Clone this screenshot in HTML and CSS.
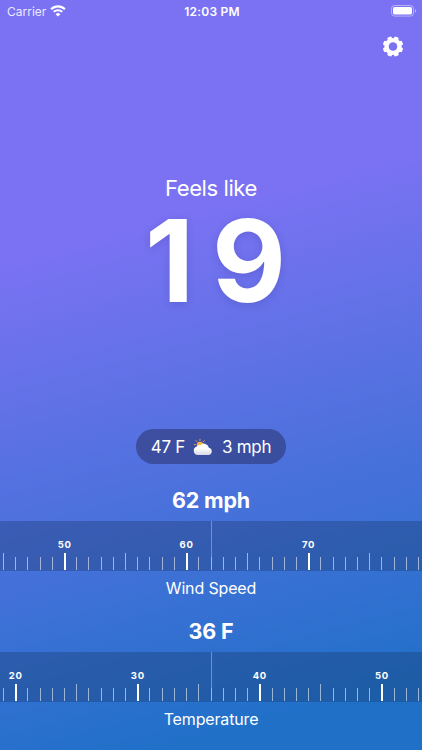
FILE: index.html
```html
<!DOCTYPE html>
<html>

	<head>
		<meta charset="UTF-8">
		<title>Feels like</title>
		<link rel="stylesheet" href="styles.css">
	</head>

	<body>

		<div class="app">
			<div class="status">
				<div class="status_left">
					<span class="carrier">Carrier</span>
					<svg class="wifi" width="16" height="12" viewBox="0 0 16 12" fill="none" stroke="#fff">
						<path d="M1.1 4.2a9.8 9.8 0 0 1 13.8 0" stroke-width="2.1" />
						<path d="M3.7 6.9a6.1 6.1 0 0 1 8.6 0" stroke-width="2" />
						<path d="M8 11.6L5.6 9.2a3.5 3.5 0 0 1 4.8 0z" fill="#fff" stroke="none" />
					</svg>
				</div>
				<div class="clock">12:03 PM</div>
				<div class="status_right">
					<svg width="26" height="12" viewBox="0 0 26 12">
						<rect x="0.5" y="0.5" width="22" height="10.6" rx="3.2" fill="none" stroke="#fff" stroke-opacity=".45" />
						<rect x="2" y="2" width="19" height="7.6" rx="1.8" fill="#fff" />
						<path d="M24 4v3.8c1.5-.6 1.5-3.2 0-3.8z" fill="#fff" fill-opacity=".5" />
					</svg>
				</div>
			</div>

			<div class="toolbar">
				<svg class="gear" width="22" height="22" viewBox="-11 -10.5 22 22">
					<g fill="#fff">
						<rect x="-2.3" y="-10.2" width="4.6" height="20.4" rx="1.2" transform="rotate(22.5)" />
						<rect x="-2.3" y="-10.2" width="4.6" height="20.4" rx="1.2" transform="rotate(67.5)" />
						<rect x="-2.3" y="-10.2" width="4.6" height="20.4" rx="1.2" transform="rotate(112.5)" />
						<rect x="-2.3" y="-10.2" width="4.6" height="20.4" rx="1.2" transform="rotate(157.5)" />
						<circle r="8.6" />
					</g>
					<circle r="4.3" fill="#7b72f3" />
				</svg>
			</div>

			<div class="feels">
				<div class="feels_label">Feels like</div>
				<div class="feels_value">19</div>
			</div>

			<div class="current">
				<span class="current_temp">47 F</span>
				<svg class="cloud" width="20" height="18" viewBox="0 0 20 18">
					<defs>
						<linearGradient id="cloudFill" x1="0" y1="0" x2="0" y2="1">
							<stop offset="0.4" stop-color="#ffffff" />
							<stop offset="1" stop-color="#d5d9e6" />
						</linearGradient>
					</defs>
					<path d="M7 .8v2M2.6 2.3l1.5 1.6M11.6 2.4l-1.5 1.6M.8 6.6h2.1" stroke="#e2a04e" stroke-width="1" />
					<circle cx="7" cy="7" r="3.2" fill="#f6b545" />
					<path d="M4.8 17a4.3 4.3 0 0 1-1-8.4 3.1 3.1 0 0 1 3.7-1.4 4.9 4.9 0 0 1 8.4 2.6 3.7 3.7 0 0 1 0 7.2z" fill="url(#cloudFill)" />
				</svg>
				<span class="current_wind">3 mph</span>
			</div>

			<div class="gauge">
				<div class="gauge_value">62 mph</div>
				<div class="scale" data-value="62"></div>
				<div class="gauge_name">Wind Speed</div>
			</div>

			<div class="gauge">
				<div class="gauge_value gauge_value_temp">36 F</div>
				<div class="scale" data-value="36"></div>
				<div class="gauge_name">Temperature</div>
			</div>
		</div>

		<script src="scale.js" type="text/javascript" charset="utf-8"></script>
	</body>

</html>
```
FILE: scale.js
```js
//ticks on each side of the current value
var SIDE = 17;

function drawScale(ele){
	var value = parseInt(ele.getAttribute('data-value'),10);
	for(var i = value - SIDE; i <= value + SIDE; i++){
		var tick = document.createElement('div');
		tick.className = 'tick';
		if(i % 10 === 0){
			tick.className += ' tick_major';
			var label = document.createElement('span');
			label.className = 'tick_label';
			label.textContent = i;
			tick.appendChild(label);
		}else if(i % 5 === 0){
			tick.className += ' tick_half';
		}
		var line = document.createElement('i');
		line.className = 'tick_line';
		tick.appendChild(line);
		ele.appendChild(tick);
	}
}

var scales = document.getElementsByClassName('scale');
for(var n = 0; n < scales.length; n++){
	drawScale(scales[n]);
}
```
FILE: styles.css
```css
* {
	margin: 0px;
	padding: 0px;
	box-sizing: border-box;
}
body {
	font-family: Inter, "Liberation Sans", sans-serif;
	color: #FFFFFF;
}
svg {
	display: block;
}
.app {
	width: 422px;
	height: 750px;
	overflow: hidden;
	display: flex;
	flex-direction: column;
	align-items: center;
	background: linear-gradient(165deg, #7b72f3 0%, #7b72f3 30%, #2070c8 92%, #2070c8 100%);
}
.status {
	width: 100%;
	height: 22px;
	padding: 0 5px 0 7px;
	flex: none;
	display: grid;
	grid-template-columns: 1fr auto 1fr;
	align-items: center;
}
.status_left {
	display: flex;
	align-items: center;
	gap: 4px;
}
.carrier {
	font-size: 12px;
	opacity: 0.85;
}
.clock {
	font-size: 12px;
	font-weight: 600;
	letter-spacing: 0.2px;
}
.status_right {
	display: flex;
	justify-content: flex-end;
}
.toolbar {
	width: 100%;
	height: 50px;
	padding: 14px 18px 0 0;
	flex: none;
	display: flex;
	justify-content: flex-end;
}
.feels {
	height: 357px;
	padding-top: 102px;
	flex: none;
	text-align: center;
}
.feels_label {
	font-size: 22px;
	line-height: 28px;
	letter-spacing: -0.4px;
}
.feels_value {
	padding-left: 27px;
	font-size: 114px;
	line-height: 118px;
	font-weight: 700;
	letter-spacing: 18px;
	text-shadow: 0 2px 8px rgba(40, 40, 130, 0.2);
}
.current {
	width: 150px;
	height: 35px;
	flex: none;
	display: flex;
	align-items: center;
	justify-content: center;
	border-radius: 18px;
	background: rgba(42, 50, 105, 0.55);
	font-size: 17px;
	letter-spacing: -0.3px;
}
.cloud {
	margin: 0 9px 0 8px;
}
.gauge {
	width: 100%;
	flex: none;
	text-align: center;
}
.gauge_value {
	height: 57px;
	padding-top: 22px;
	font-size: 21.5px;
	line-height: 28px;
	font-weight: 700;
	letter-spacing: -0.2px;
}
.gauge_value_temp {
	height: 47px;
	padding-top: 12px;
}
.scale {
	height: 50px;
	padding-bottom: 1px;
	position: relative;
	display: flex;
	justify-content: center;
	background: rgba(24, 52, 96, 0.33);
}
/* current value marker */
.scale:before {
	content: "";
	width: 1px;
	height: 36px;
	position: absolute;
	top: 0;
	left: 211px;
	background: #46a9b4;
}
.tick {
	width: 12.217px;
	flex: none;
	display: flex;
	flex-direction: column;
	align-items: center;
	justify-content: flex-end;
}
.tick_line {
	width: 1px;
	height: 13px;
	flex: none;
	background: rgba(255, 255, 255, 0.55);
}
.tick_half .tick_line {
	height: 17px;
}
.tick_major .tick_line {
	width: 2px;
	height: 17px;
	background: #FFFFFF;
}
.tick_label {
	margin-bottom: 2px;
	font-size: 9.5px;
	line-height: 12px;
	font-weight: 700;
	letter-spacing: 0.7px;
}
.gauge_name {
	height: 34px;
	padding-top: 5px;
	font-size: 16px;
	line-height: 24px;
	letter-spacing: -0.15px;
}
```
